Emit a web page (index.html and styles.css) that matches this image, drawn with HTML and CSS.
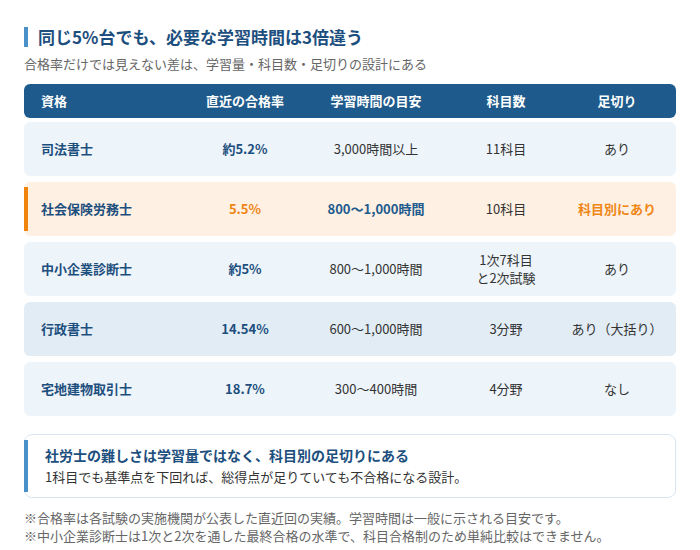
FILE: index.html
```html
<!DOCTYPE html>
<html lang="ja">
<head>
<meta charset="utf-8">
<title>資格比較</title>
<link rel="stylesheet" href="styles.css">
</head>
<body>
<main class="page">
  <h1 class="title">同じ5%台でも、必要な学習時間は3倍違う</h1>
  <p class="subtitle">合格率だけでは見えない差は、学習量・科目数・足切りの設計にある</p>

  <div class="table">
    <div class="row head">
      <div class="cell name">資格</div>
      <div class="cell">直近の合格率</div>
      <div class="cell">学習時間の目安</div>
      <div class="cell">科目数</div>
      <div class="cell">足切り</div>
    </div>
    <div class="row">
      <div class="cell name">司法書士</div>
      <div class="cell rate">約5.2%</div>
      <div class="cell">3,000時間以上</div>
      <div class="cell">11科目</div>
      <div class="cell">あり</div>
    </div>
    <div class="row hl">
      <div class="cell name">社会保険労務士</div>
      <div class="cell rate orange">5.5%</div>
      <div class="cell strong">800〜1,000時間</div>
      <div class="cell">10科目</div>
      <div class="cell strong orange">科目別にあり</div>
    </div>
    <div class="row">
      <div class="cell name">中小企業診断士</div>
      <div class="cell rate">約5%</div>
      <div class="cell">800〜1,000時間</div>
      <div class="cell two">1次7科目<br>と2次試験</div>
      <div class="cell">あり</div>
    </div>
    <div class="row alt">
      <div class="cell name">行政書士</div>
      <div class="cell rate">14.54%</div>
      <div class="cell">600〜1,000時間</div>
      <div class="cell">3分野</div>
      <div class="cell">あり（大括り）</div>
    </div>
    <div class="row">
      <div class="cell name">宅地建物取引士</div>
      <div class="cell rate">18.7%</div>
      <div class="cell">300〜400時間</div>
      <div class="cell">4分野</div>
      <div class="cell">なし</div>
    </div>
  </div>

  <div class="callout">
    <p class="callout-title">社労士の難しさは学習量ではなく、科目別の足切りにある</p>
    <p class="callout-body">1科目でも基準点を下回れば、総得点が足りていても不合格になる設計。</p>
  </div>

  <div class="notes">
    <p>※合格率は各試験の実施機関が公表した直近回の実績。学習時間は一般に示される目安です。</p>
    <p>※中小企業診断士は1次と2次を通した最終合格の水準で、科目合格制のため単純比較はできません。</p>
  </div>
</main>
</body>
</html>
```

FILE: styles.css
```css
* { box-sizing: border-box; }
html, body { margin: 0; padding: 0; background: #ffffff; }
body {
  font-family: "Noto Sans CJK JP", "Noto Sans", sans-serif;
  color: #333333;
}
p, h1 { margin: 0; }

.page {
  width: 700px;
  padding: 24px 24px 0 24px;
}

.title {
  display: flex;
  align-items: center;
  gap: 10px;
  font-size: 17px;
  line-height: 26px;
  font-weight: 700;
  color: #1d4f7e;
}
.title::before {
  content: "";
  width: 4px;
  height: 20px;
  background: #4a90c9;
  flex: none;
}

.subtitle {
  margin-top: 4px;
  font-size: 13px;
  line-height: 20px;
  color: #666666;
}

.table {
  margin-top: 10px;
  display: flex;
  flex-direction: column;
  gap: 6px;
}

.row {
  position: relative;
  display: grid;
  grid-template-columns: 168px 106px 156px 104px 118px;
  height: 54px;
  align-items: center;
  background: #edf4fa;
  border-radius: 6px;
  font-size: 13px;
  line-height: 18px;
}
.row.head {
  height: 34px;
  margin-bottom: -2px;
  background: #1e5a8b;
  color: #ffffff;
  font-weight: 700;
}
.row.alt { background: #e2ecf5; }
.row.hl { background: #fef0e2; }
.row.hl::before {
  content: "";
  position: absolute;
  left: 0;
  top: 5px;
  bottom: 5px;
  width: 4px;
  background: #f0840c;
}

.cell {
  text-align: center;
  color: #333333;
}
.head .cell { color: #ffffff; }
.cell.name {
  text-align: left;
  padding-left: 17px;
  font-weight: 700;
  color: #1d4f7e;
}
.head .cell.name { color: #ffffff; }
.cell.rate {
  font-weight: 700;
  color: #1d4f7e;
}
.cell.strong {
  font-weight: 700;
  color: #1d5a8e;
}
.cell.orange { color: #ef8616; }
.cell.two { line-height: 18px; }

.callout {
  position: relative;
  margin-top: 18px;
  height: 64px;
  border: 1px solid #d9e6f1;
  border-radius: 8px;
  padding: 10px 20px 0 20px;
  display: flex;
  flex-direction: column;
  gap: 2px;
}
.callout::before {
  content: "";
  position: absolute;
  left: -1px;
  top: 5px;
  bottom: 5px;
  width: 4px;
  background: #4a90c9;
}
.callout-title {
  font-size: 14px;
  line-height: 20px;
  font-weight: 700;
  color: #1d4f7e;
}
.callout-body {
  font-size: 13px;
  line-height: 20px;
  color: #333333;
}

.notes {
  margin-top: 11px;
  font-size: 13px;
  line-height: 18px;
  color: #666666;
}
```
